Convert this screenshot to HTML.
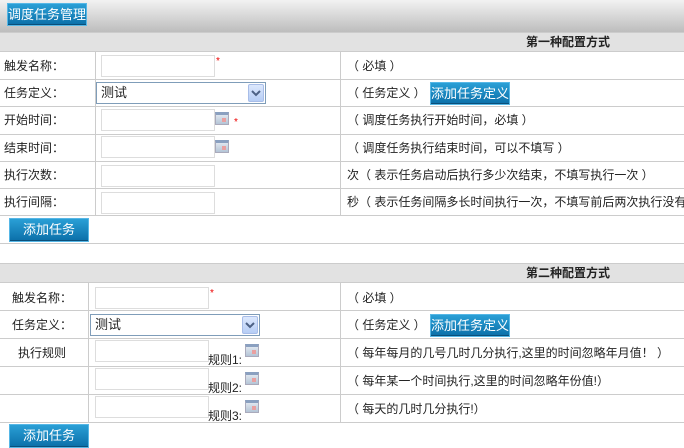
<!DOCTYPE html>
<html><head><meta charset="utf-8">
<style>
*{margin:0;padding:0;box-sizing:border-box}
body{width:684px;height:448px;overflow:hidden;background:#fff;position:relative;font-family:"Liberation Sans","Noto Sans CJK SC","WenQuanYi Zen Hei",sans-serif;font-size:12px;color:#222}
.a{position:absolute}
.top{left:0;top:0;width:684px;height:32px;background:linear-gradient(#f2f2f2,#bdbdbd)}
.btn{position:absolute;background:linear-gradient(#2a9fd6,#0b6fa8);border:1px solid #56b7e6;color:#fff;font-size:13px;line-height:20px;text-align:center;box-shadow:inset 0 -1px 0 #0a4f7a}
.band{left:0;width:684px;height:20px;background:#e2e2e2;border-top:1px solid #ccc;border-bottom:1px solid #ccc;font-weight:bold;font-size:12px;line-height:19px}
.hl{position:absolute;left:0;width:684px;height:1px;background:#ccc}
.vl{position:absolute;width:1px;background:#ccc}
.inp{position:absolute;border:1px solid #ddd;background:#fff;width:114px;height:22px}
.sel{position:absolute;border:1px solid #7f9db9;background:#fff;width:170px;height:22px;font-size:13px;line-height:20px;padding-left:4px}
.sel i{position:absolute;right:1px;top:1px;width:16px;height:18px;background:linear-gradient(#dce8fd,#b6cdf5);border:1px solid #a8bde8;border-radius:2px}
.cal{position:absolute;width:14px;height:13px;background:linear-gradient(#dfe6ee,#b4c4d6);border:1px solid #aab;border-top:3px solid #8aa0c0}
.cal:after{content:"";position:absolute;right:2px;top:3px;width:4px;height:4px;background:#e9a0a0}
.star{position:absolute;color:#e00;font-size:10px}
.t{position:absolute;white-space:nowrap}
</style></head><body>
<div class="a top"></div>
<div class="btn" style="left:7px;top:3px;width:80px;height:23px;font-size:13px;line-height:21px">调度任务管理</div>

<div class="a band" style="top:32px"><span style="position:absolute;left:526px">第一种配置方式</span></div>
<div class="hl" style="top:79px"></div>
<div class="hl" style="top:106px"></div>
<div class="hl" style="top:134px"></div>
<div class="hl" style="top:161px"></div>
<div class="hl" style="top:188px"></div>
<div class="hl" style="top:215px"></div>
<div class="vl" style="left:95px;top:52px;height:164px"></div>
<div class="vl" style="left:340px;top:52px;height:164px"></div>

<div class="t" style="left:4px;top:57px">触发名称：</div>
<div class="t" style="left:4px;top:84px">任务定义：</div>
<div class="t" style="left:4px;top:111px">开始时间：</div>
<div class="t" style="left:4px;top:139px">结束时间：</div>
<div class="t" style="left:4px;top:166px">执行次数：</div>
<div class="t" style="left:4px;top:193px">执行间隔：</div>

<div class="inp" style="left:101px;top:55px"></div><span class="star" style="left:216px;top:56px">*</span>
<div class="sel" style="left:96px;top:82px">测试<i><svg width="14" height="16"><path d="M3 6l4 4 4-4" stroke="#4d6185" stroke-width="2" fill="none"/></svg></i></div>
<div class="inp" style="left:101px;top:109px"></div><div class="cal" style="left:215px;top:112px"></div><span class="star" style="left:234px;top:117px">*</span>
<div class="inp" style="left:101px;top:136px"></div><div class="cal" style="left:215px;top:140px"></div>
<div class="inp" style="left:101px;top:165px"></div>
<div class="inp" style="left:101px;top:192px"></div>

<div class="t" style="left:347px;top:57px">（ 必填 ）</div>
<div class="t" style="left:347px;top:84px">（ 任务定义 ）</div>
<div class="btn" style="left:430px;top:82px;width:80px;height:23px;line-height:21px">添加任务定义</div>
<div class="t" style="left:347px;top:111px">（ 调度任务执行开始时间，必填 ）</div>
<div class="t" style="left:347px;top:139px">（ 调度任务执行结束时间，可以不填写 ）</div>
<div class="t" style="left:347px;top:166px">次（ 表示任务启动后执行多少次结束，不填写执行一次 ）</div>
<div class="t" style="left:347px;top:193px;width:337px;overflow:hidden">秒（ 表示任务间隔多长时间执行一次，不填写前后两次执行没有间隔</div>

<div class="btn" style="left:9px;top:218px;width:80px;height:24px;line-height:22px">添加任务</div>
<div class="hl" style="top:243px"></div>

<div class="a band" style="top:263px"><span style="position:absolute;left:526px">第二种配置方式</span></div>
<div class="hl" style="top:310px"></div>
<div class="hl" style="top:338px"></div>
<div class="hl" style="top:366px"></div>
<div class="hl" style="top:394px"></div>
<div class="hl" style="top:422px"></div>
<div class="vl" style="left:88px;top:283px;height:140px"></div>
<div class="vl" style="left:340px;top:283px;height:140px"></div>

<div class="t" style="left:12px;top:289px">触发名称：</div>
<div class="t" style="left:12px;top:316px">任务定义：</div>
<div class="t" style="left:18px;top:344px">执行规则</div>

<div class="inp" style="left:95px;top:287px"></div><span class="star" style="left:210px;top:288px">*</span>
<div class="sel" style="left:90px;top:314px">测试<i><svg width="14" height="16"><path d="M3 6l4 4 4-4" stroke="#4d6185" stroke-width="2" fill="none"/></svg></i></div>
<div class="inp" style="left:95px;top:340px"></div><div class="t" style="left:208px;top:351px">规则1:</div><div class="cal" style="left:245px;top:344px"></div>
<div class="inp" style="left:95px;top:368px"></div><div class="t" style="left:208px;top:379px">规则2:</div><div class="cal" style="left:245px;top:372px"></div>
<div class="inp" style="left:95px;top:396px"></div><div class="t" style="left:208px;top:407px">规则3:</div><div class="cal" style="left:245px;top:400px"></div>

<div class="t" style="left:347px;top:289px">（ 必填 ）</div>
<div class="t" style="left:347px;top:316px">（ 任务定义 ）</div>
<div class="btn" style="left:430px;top:314px;width:80px;height:23px;line-height:21px">添加任务定义</div>
<div class="t" style="left:347px;top:344px">（ 每年每月的几号几时几分执行,这里的时间忽略年月值！ ）</div>
<div class="t" style="left:347px;top:372px">（ 每年某一个时间执行,这里的时间忽略年份值!）</div>
<div class="t" style="left:347px;top:400px">（ 每天的几时几分执行!）</div>

<div class="btn" style="left:9px;top:424px;width:80px;height:24px;line-height:22px">添加任务</div>
</body></html>
